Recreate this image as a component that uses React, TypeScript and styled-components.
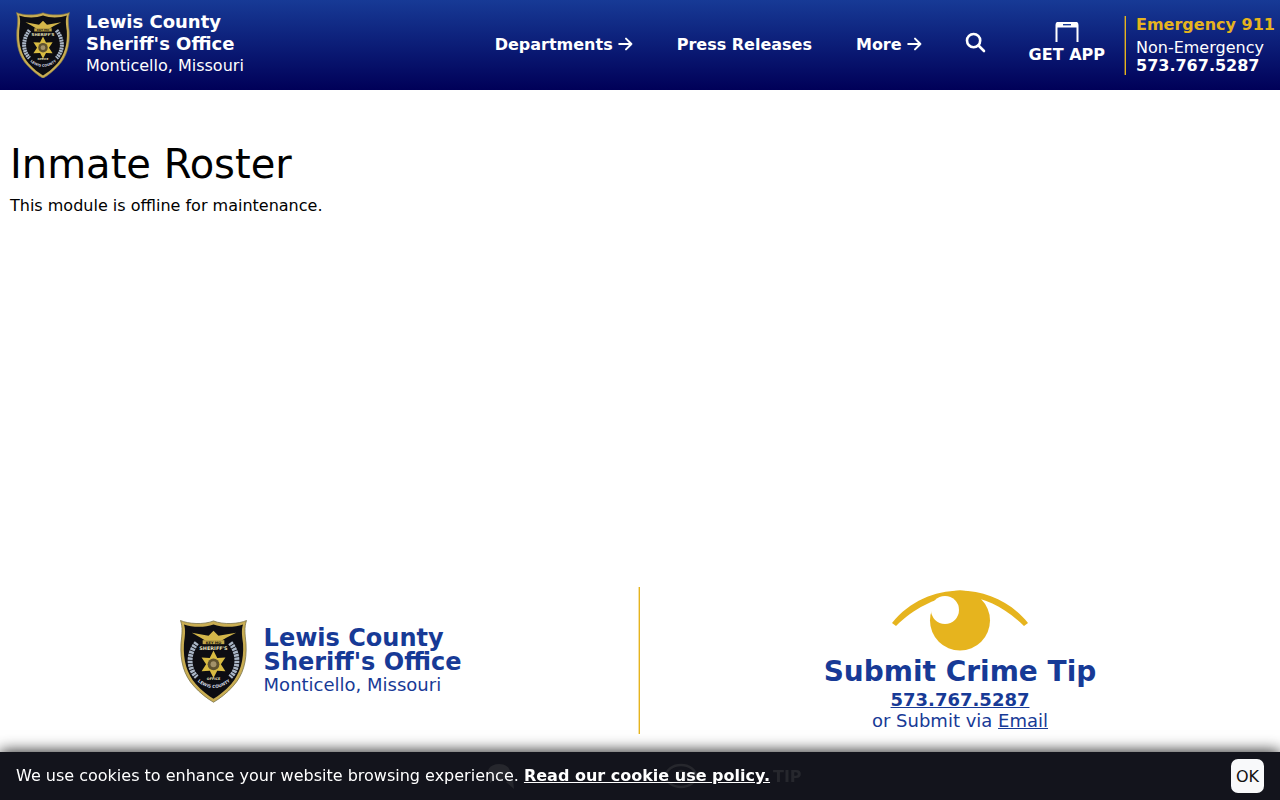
import styled, { createGlobalStyle } from 'styled-components';

const GlobalStyle = createGlobalStyle`
  html, body {
    margin: 0;
    padding: 0;
    background: #fff;
    font-family: "DejaVu Sans", sans-serif;
    color: #000;
  }
  * { box-sizing: border-box; }
`;

const starPoints = () => {
  const pts: string[] = [];
  for (let i = 0; i < 12; i++) {
    const r = i % 2 === 0 ? 14 : 7.5;
    const a = (Math.PI / 6) * i - Math.PI / 2;
    pts.push(`${(34 + r * Math.cos(a)).toFixed(1)},${(45 + r * Math.sin(a)).toFixed(1)}`);
  }
  return pts.join(' ');
};

const Badge = ({ size, id }: { size: number; id: string }) => (
  <svg width={size} height={size * 1.235} viewBox="0 0 68 84" style={{ display: 'block', flexShrink: 0 }}>
    <path
      d="M0.500 0.500 C8 4 24 5 34 1 C44 5 60 4 67.500 0.500 C65 8 66 14 67 24 C68 42 64 56 54 67 C48 74 40 80 34 83.500 C28 80 20 74 14 67 C4 56 0 42 1 24 C2 14 3 8 0.500 0.500 Z"
      fill="#c9ad52"
      stroke="#77704a"
      strokeWidth="0.800"
    />
    <path
      d="M4 4.500 C12 7.500 25 8 34 4.500 C43 8 56 7.500 64 4.500 C62 10 63 16 64 24 C65 41 61 54 52 65 C46 72 39 77 34 80 C29 77 22 72 16 65 C7 54 3 41 4 24 C5 16 6 10 4 4.500 Z"
      fill="#0d0d12"
    />
    <path d="M12 13 L29 16 L34 11 L39 16 L57 13 L47 18 L42 21 L26 21 L21 18 Z" fill="#d3b64a" />
    <path d="M23 20.500 H45 V24.500 H23 Z" fill="#c2a648" />
    <text x="34" y="24" textAnchor="middle" fontSize="3.600" fontWeight="700" fill="#1a180c" fontFamily="DejaVu Sans">
      KEY MO
    </text>
    <text x="34" y="30" textAnchor="middle" fontSize="5" fontWeight="700" fill="#e9e2bd" fontFamily="DejaVu Sans">
      SHERIFF'S
    </text>
    <path d="M17 23 C7 36 9 50 17 58" fill="none" stroke="#aab6c6" strokeWidth="5" strokeDasharray="2.500 0.800" />
    <path d="M51 23 C61 36 59 50 51 58" fill="none" stroke="#aab6c6" strokeWidth="5" strokeDasharray="2.500 0.800" />
    <polygon points={starPoints()} fill="#d8bb42" />
    <circle cx="34" cy="45" r="6" fill="#5f5230" />
    <circle cx="34" cy="45" r="3" fill="#a3926a" />
    <text x="34" y="61" textAnchor="middle" fontSize="3.400" fontWeight="700" fill="#e9e2bd" fontFamily="DejaVu Sans">
      OFFICE
    </text>
    <path id={id} d="M15 60 Q34 78 54 60" fill="none" />
    <text fontSize="4.300" fontWeight="700" fill="#d6dbe2" fontFamily="DejaVu Sans">
      <textPath href={`#${id}`} startOffset="50%" textAnchor="middle">
        LEWIS COUNTY
      </textPath>
    </text>
  </svg>
);

const Arrow = () => (
  <svg width="15" height="14" viewBox="0 0 15 14" fill="none" stroke="#fff" strokeWidth="2" strokeLinecap="round" strokeLinejoin="round">
    <path d="M1.200 7 H13.400 M8 1.600 L13.400 7 L8 12.400" />
  </svg>
);

const Eye = () => (
  <svg width="136" height="61" viewBox="0 0 136 61" style={{ display: 'block' }}>
    <path d="M0 33 C18 11 42 1 68 0.500 C94 1 118 11 136 33 L132 36 C114 18 92 8 78 7 L58 7 C44 8 22 18 4 36 Z" fill="#e6b41e" />
    <circle cx="68" cy="30.500" r="30" fill="#e6b41e" />
    <circle cx="53" cy="20" r="14" fill="#fff" />
  </svg>
);

const Header = styled.header`
  height: 90px;
  display: flex;
  align-items: center;
  background: linear-gradient(#173a96, #000058);
  color: #fff;
  padding-left: 16px;
`;

const Brand = styled.div`
  display: flex;
  align-items: center;
  gap: 16px;
  margin-right: auto;
`;

const BrandText = styled.div`
  margin-top: -3px;
`;

const BrandName = styled.div`
  font-size: 18px;
  line-height: 21.600px;
  font-weight: 700;
`;

const BrandPlace = styled.div`
  font-size: 16px;
  line-height: 21px;
`;

const Nav = styled.nav`
  display: flex;
  align-items: center;
  gap: 44px;
  margin-top: -2px;
`;

const NavLink = styled.a`
  display: flex;
  align-items: center;
  gap: 5px;
  font-size: 16px;
  font-weight: 700;
  color: #fff;
`;

const SearchIcon = styled.svg`
  display: block;
  margin: -4px 0 0 -1px;
`;

const GetApp = styled.div`
  display: flex;
  flex-direction: column;
  align-items: center;
  gap: 3px;
  margin-left: 43px;
  padding-bottom: 3px;
  font-size: 16px;
  line-height: 20px;
  font-weight: 700;
`;

const Contact = styled.div`
  margin-left: 20px;
  padding-left: 10px;
  height: 59px;
  border-left: 1px solid #e6b41e;
  box-shadow: -1px 0 0 rgba(230, 180, 30, 0.4);
  width: 155px;
  white-space: nowrap;
`;

const Emergency = styled.div`
  color: #e6b41e;
  font-size: 16px;
  font-weight: 700;
  line-height: 18px;
  margin-bottom: 5px;
`;

const NonEmergency = styled.div`
  font-size: 16px;
  line-height: 18px;
`;

const Phone = styled.div`
  font-size: 16px;
  font-weight: 700;
  line-height: 18px;
`;

const Page = styled.div`
  min-height: 100vh;
  display: flex;
  flex-direction: column;
`;

const Main = styled.main`
  flex: 1;
  padding: 50px 10px 0;
`;

const Title = styled.h1`
  margin: 0;
  font-size: 40px;
  line-height: 48px;
  font-weight: 400;
`;

const Note = styled.p`
  margin: 6px 0 0;
  font-size: 16px;
  line-height: 24px;
`;

const Footer = styled.footer`
  display: grid;
  grid-template-columns: 639px 641px;
  height: 147px;
  margin-bottom: 66px;
  color: #173a96;
`;

const FooterBrand = styled.div`
  display: flex;
  align-items: center;
  justify-content: center;
  gap: 17px;
  padding-left: 2px;
`;

const FooterLogo = styled.div`
  margin-top: 2px;
`;

const FooterName = styled.div`
  font-size: 24px;
  line-height: 24px;
  font-weight: 700;
`;

const FooterPlace = styled.div`
  font-size: 18px;
  line-height: 22px;
`;

const Tip = styled.div`
  display: flex;
  flex-direction: column;
  align-items: center;
  padding-top: 3px;
  border-left: 1px solid #e6b41e;
  box-shadow: -1px 0 0 rgba(230, 180, 30, 0.4);
`;

const TipTitle = styled.div`
  font-size: 28px;
  line-height: 34px;
  font-weight: 700;
  margin-top: 4px;
`;

const TipPhone = styled.a`
  font-size: 18px;
  line-height: 22px;
  font-weight: 700;
  text-decoration: underline;
`;

const TipVia = styled.div`
  font-size: 18px;
  line-height: 20px;
`;

const EmailLink = styled.a`
  text-decoration: underline;
`;

const CookieBar = styled.div`
  position: fixed;
  left: 0;
  right: 0;
  bottom: 0;
  height: 48px;
  display: flex;
  align-items: center;
  justify-content: space-between;
  padding: 0 16px;
  background: #13141c;
  box-shadow: 0 -1px 14px rgba(0, 0, 0, 0.85);
  color: #fff;
  font-size: 16px;
`;

// faint mobile toolbar that shows through the cookie bar
const GhostItem = styled.div<{ $left: number }>`
  position: absolute;
  left: ${(p) => p.$left}px;
  top: 0;
  height: 48px;
  display: flex;
  align-items: center;
  color: #26272d;
  font-size: 16px;
  font-weight: 700;
`;

const CookieText = styled.div`
  position: relative;
  white-space: nowrap;
  margin-top: -1px;
`;

const PolicyLink = styled.a`
  font-weight: 700;
  text-decoration: underline;
`;

const OkButton = styled.button`
  position: relative;
  width: 33px;
  height: 34px;
  border: none;
  border-radius: 7px;
  padding: 0;
  background: #f8f9fa;
  color: #111;
  font-family: inherit;
  font-size: 16px;
`;

export default function App() {
  return (
    <Page>
      <GlobalStyle />
      <Header>
        <Brand>
          <Badge size={54} id="badge-top" />
          <BrandText>
            <BrandName>
              Lewis County
              <br />
              Sheriff's Office
            </BrandName>
            <BrandPlace>Monticello, Missouri</BrandPlace>
          </BrandText>
        </Brand>
        <Nav>
          <NavLink>
            Departments <Arrow />
          </NavLink>
          <NavLink>Press Releases</NavLink>
          <NavLink>
            More <Arrow />
          </NavLink>
          <SearchIcon width="21" height="21" viewBox="0 0 21 21" fill="none" stroke="#fff" strokeWidth="2.600" strokeLinecap="round">
            <circle cx="8.600" cy="8.600" r="6.600" />
            <path d="M13.500 13.500 L19 19" />
          </SearchIcon>
        </Nav>
        <GetApp>
          <svg width="24" height="20" viewBox="0 0 24 20" fill="none" style={{ display: 'block' }}>
            <path d="M1.500 20 V3 C1.500 1.500 2.500 0.500 4 0.500 H20 C21.500 0.500 22.500 1.500 22.500 3 V20" stroke="#fff" strokeWidth="2" />
            <path d="M1.500 3 C1.500 1.500 2.500 0.500 4 0.500 H20 C21.500 0.500 22.500 1.500 22.500 3 V5.500 H1.500 Z" fill="#fff" />
            <path d="M8 2.700 H16" stroke="#173a96" strokeWidth="1.400" />
          </svg>
          GET APP
        </GetApp>
        <Contact>
          <Emergency>Emergency 911</Emergency>
          <NonEmergency>Non-Emergency</NonEmergency>
          <Phone>573.767.5287</Phone>
        </Contact>
      </Header>
      <Main>
        <Title>Inmate Roster</Title>
        <Note>This module is offline for maintenance.</Note>
      </Main>
      <Footer>
        <FooterBrand>
          <FooterLogo>
            <Badge size={67} id="badge-footer" />
          </FooterLogo>
          <div>
            <FooterName>
              Lewis County
              <br />
              Sheriff's Office
            </FooterName>
            <FooterPlace>Monticello, Missouri</FooterPlace>
          </div>
        </FooterBrand>
        <Tip>
          <Eye />
          <TipTitle>Submit Crime Tip</TipTitle>
          <TipPhone>573.767.5287</TipPhone>
          <TipVia>
            or Submit via <EmailLink>Email</EmailLink>
          </TipVia>
        </Tip>
      </Footer>
      <CookieBar>
        <GhostItem $left={486}>
          <svg width="32" height="28" viewBox="0 0 32 28" fill="#26272d">
            <path d="M2 10 C2 5 7 2 13 2 C19 2 24 5 24 10 C24 15 19 18 13 18 L7 18 L4 21 L4 16 C3 14 2 12 2 10 Z" />
            <path d="M20 20 L28 27 L27 18 Z" />
          </svg>
        </GhostItem>
        <GhostItem $left={664}>
          <svg width="36" height="26" viewBox="0 0 36 26" fill="none" stroke="#26272d" strokeWidth="2.500">
            <ellipse cx="17" cy="13" rx="15" ry="11" />
            <circle cx="17" cy="13" r="5" />
          </svg>
        </GhostItem>
        <GhostItem $left={773}>TIP</GhostItem>
        <CookieText>
          We use cookies to enhance your website browsing experience. <PolicyLink>Read our cookie use policy.</PolicyLink>
        </CookieText>
        <OkButton>OK</OkButton>
      </CookieBar>
    </Page>
  );
}
